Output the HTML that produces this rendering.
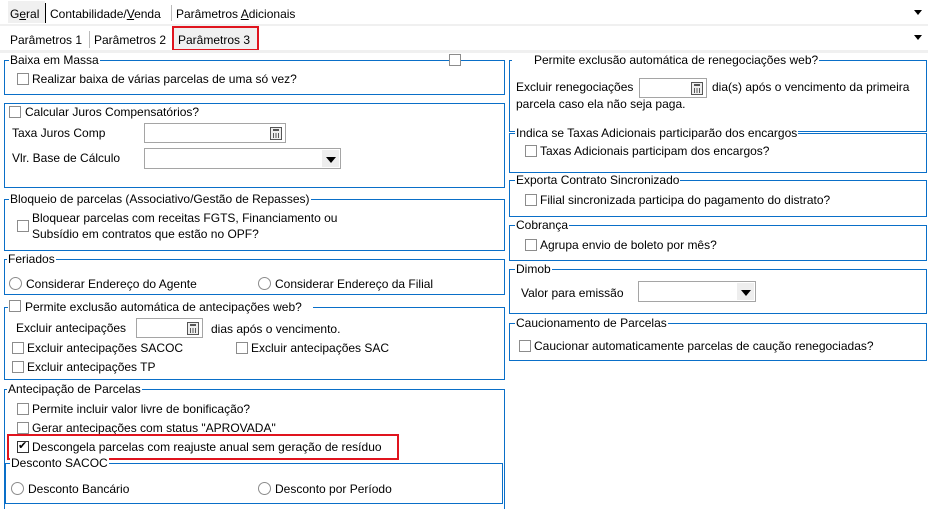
<!DOCTYPE html>
<html><head><meta charset="utf-8"><style>
*{margin:0;padding:0;box-sizing:border-box}
body{width:928px;height:509px;background:#fff;font-family:"Liberation Sans",sans-serif;font-size:12px;color:#000;position:relative;overflow:hidden}
.a{position:absolute;white-space:nowrap;line-height:14px}
.box{position:absolute;border:1px solid #0a6fc8}
.t{position:absolute;background:#fff;padding:0 1px;line-height:14px;white-space:nowrap}
.cb{position:absolute;width:12px;height:12px;border:1px solid #8c8c8c;background:#fff}
.rd{position:absolute;width:13px;height:13px;border:1px solid #8c8c8c;border-radius:50%;background:#fff}
.in{position:absolute;border:1px solid #a5a5a5;background:#fff}
.calc{position:absolute;right:3px;top:3px;width:12px;height:13px;border:1px solid #555;background:#eee}
.calc:before{content:"";position:absolute;left:2px;top:1px;width:6px;height:2px;background:#555}
.calc:after{content:"";position:absolute;left:2px;top:5px;width:6px;height:5px;background:repeating-linear-gradient(90deg,#555 0 1px,transparent 1px 2.5px)}
.dd{position:absolute;right:1px;top:1px;bottom:1px;width:17px;background:#eee}
.dd:after{content:"";position:absolute;left:4px;top:7px;border-left:5px solid transparent;border-right:5px solid transparent;border-top:6px solid #000}
.tri{position:absolute;border-left:4px solid transparent;border-right:4px solid transparent;border-top:5px solid #000}
</style></head><body>
<!-- tabs -->
<div style="position:absolute;left:0;top:0;width:928px;height:24px;background:#fff"></div>
<div style="position:absolute;left:8px;top:1px;width:37px;height:22px;background:#f0f0f0"></div>
<div class="a" style="left:10px;top:7px">G<u>e</u>ral</div>
<div style="position:absolute;left:45px;top:3px;width:1px;height:20px;background:#000"></div>
<div class="a" style="left:50px;top:7px">Contabilidade/<u>V</u>enda</div>
<div style="position:absolute;left:171px;top:5px;width:1px;height:16px;background:#bbb"></div>
<div class="a" style="left:176px;top:7px">Parâmetros <u>A</u>dicionais</div>
<div class="tri" style="left:914px;top:10px"></div>
<div style="position:absolute;left:0;top:24px;width:928px;height:2px;background:#f0f0f0"></div>
<div class="a" style="left:10px;top:33px">Parâmetros 1</div>
<div style="position:absolute;left:89px;top:31px;width:1px;height:17px;background:#bbb"></div>
<div class="a" style="left:94px;top:33px">Parâmetros 2</div>
<div style="position:absolute;left:172px;top:26px;width:87px;height:25px;border:2px solid #e0141e;background:#f0f0f0"></div>
<div class="a" style="left:178px;top:33px">Parâmetros 3</div>
<div class="tri" style="left:914px;top:35px"></div>
<div style="position:absolute;left:0;top:50px;width:928px;height:3px;background:#f0f0f0"></div>

<!-- left column -->
<div class="box" style="left:4px;top:60px;width:501px;height:35px"></div>
<div class="t" style="left:9px;top:53px">Baixa em Massa</div>
<div class="cb" style="left:449px;top:54px"></div>
<div class="cb" style="left:17px;top:73px"></div>
<div class="a" style="left:32px;top:72px">Realizar baixa de várias parcelas de uma só vez?</div>

<div class="box" style="left:4px;top:103px;width:501px;height:85px"></div>
<div class="t" style="left:8px;top:105px;padding-right:3px">&nbsp;</div>
<div class="cb" style="left:9px;top:106px"></div>
<div class="a" style="left:25px;top:105px">Calcular Juros Compensatórios?</div>
<div class="a" style="left:12px;top:126px">Taxa Juros Comp</div>
<div class="in" style="left:144px;top:123px;width:142px;height:20px"><div class="calc"></div></div>
<div class="a" style="left:12px;top:151px">Vlr. Base de Cálculo</div>
<div class="in" style="left:144px;top:148px;width:197px;height:21px"><div class="dd"></div></div>

<div class="box" style="left:4px;top:199px;width:501px;height:52px"></div>
<div class="t" style="left:9px;top:192px">Bloqueio de parcelas (Associativo/Gestão de Repasses)</div>
<div class="cb" style="left:17px;top:220px"></div>
<div class="a" style="left:32px;top:211px">Bloquear parcelas com receitas FGTS, Financiamento ou</div>
<div class="a" style="left:32px;top:227px">Subsídio em contratos que estão no OPF?</div>

<div class="box" style="left:4px;top:259px;width:501px;height:36px"></div>
<div class="t" style="left:7px;top:252px">Feriados</div>
<div class="rd" style="left:9px;top:277px"></div>
<div class="a" style="left:26px;top:277px">Considerar Endereço do Agente</div>
<div class="rd" style="left:258px;top:277px"></div>
<div class="a" style="left:275px;top:277px">Considerar Endereço da Filial</div>

<div class="box" style="left:4px;top:307px;width:501px;height:73px"></div>
<div class="t" style="left:8px;top:300px;width:305px">&nbsp;</div>
<div class="cb" style="left:9px;top:300px"></div>
<div class="a" style="left:25px;top:300px">Permite exclusão automática de antecipações web?</div>
<div class="a" style="left:16px;top:321px">Excluir antecipações</div>
<div class="in" style="left:136px;top:318px;width:67px;height:20px"><div class="calc"></div></div>
<div class="a" style="left:211px;top:322px">dias após o vencimento.</div>
<div class="cb" style="left:12px;top:342px"></div>
<div class="a" style="left:27px;top:341px">Excluir antecipações SACOC</div>
<div class="cb" style="left:236px;top:342px"></div>
<div class="a" style="left:251px;top:341px">Excluir antecipações SAC</div>
<div class="cb" style="left:12px;top:361px"></div>
<div class="a" style="left:27px;top:360px">Excluir antecipações TP</div>

<div class="box" style="left:4px;top:389px;width:501px;height:120px;border-bottom:none"></div>
<div class="t" style="left:7px;top:382px">Antecipação de Parcelas</div>
<div class="cb" style="left:17px;top:403px"></div>
<div class="a" style="left:32px;top:402px">Permite incluir valor livre de bonificação?</div>
<div class="cb" style="left:17px;top:422px"></div>
<div class="a" style="left:32px;top:421px">Gerar antecipações com status "APROVADA"</div>
<div style="position:absolute;left:7px;top:434px;width:392px;height:26px;border:2px solid #e0141e"></div>
<div class="cb" style="left:17px;top:441px;border-color:#333"></div>
<div class="a" style="left:18px;top:439px;font-size:11px">✔</div>
<div class="a" style="left:32px;top:440px">Descongela parcelas com reajuste anual sem geração de resíduo</div>
<div class="box" style="left:5px;top:463px;width:498px;height:41px"></div>
<div class="t" style="left:10px;top:456px">Desconto SACOC</div>
<div class="rd" style="left:11px;top:482px"></div>
<div class="a" style="left:28px;top:482px">Desconto Bancário</div>
<div class="rd" style="left:258px;top:482px"></div>
<div class="a" style="left:275px;top:482px">Desconto por Período</div>

<!-- right column -->
<div class="box" style="left:509px;top:60px;width:418px;height:72px"></div>
<div class="t" style="left:512px;top:53px;padding-left:22px">Permite exclusão automática de renegociações web?</div>
<div class="a" style="left:516px;top:80px">Excluir renegociações</div>
<div class="in" style="left:639px;top:78px;width:68px;height:20px"><div class="calc"></div></div>
<div class="a" style="left:712px;top:80px">dia(s) após o vencimento da primeira</div>
<div class="a" style="left:516px;top:97px">parcela caso ela não seja paga.</div>

<div class="box" style="left:509px;top:133px;width:418px;height:40px"></div>
<div class="t" style="left:515px;top:126px">Indica se Taxas Adicionais participarão dos encargos</div>
<div class="cb" style="left:525px;top:145px"></div>
<div class="a" style="left:540px;top:144px">Taxas Adicionais participam dos encargos?</div>

<div class="box" style="left:509px;top:180px;width:418px;height:37px"></div>
<div class="t" style="left:515px;top:173px">Exporta Contrato Sincronizado</div>
<div class="cb" style="left:525px;top:194px"></div>
<div class="a" style="left:540px;top:193px">Filial sincronizada participa do pagamento do distrato?</div>

<div class="box" style="left:509px;top:225px;width:418px;height:36px"></div>
<div class="t" style="left:515px;top:218px">Cobrança</div>
<div class="cb" style="left:525px;top:239px"></div>
<div class="a" style="left:540px;top:238px">Agrupa envio de boleto por mês?</div>

<div class="box" style="left:509px;top:269px;width:418px;height:45px"></div>
<div class="t" style="left:515px;top:262px">Dimob</div>
<div class="a" style="left:521px;top:286px">Valor para emissão</div>
<div class="in" style="left:638px;top:281px;width:118px;height:21px"><div class="dd"></div></div>

<div class="box" style="left:509px;top:323px;width:418px;height:38px"></div>
<div class="t" style="left:515px;top:316px">Caucionamento de Parcelas</div>
<div class="cb" style="left:519px;top:340px"></div>
<div class="a" style="left:534px;top:339px">Caucionar automaticamente parcelas de caução renegociadas?</div>
</body></html>
